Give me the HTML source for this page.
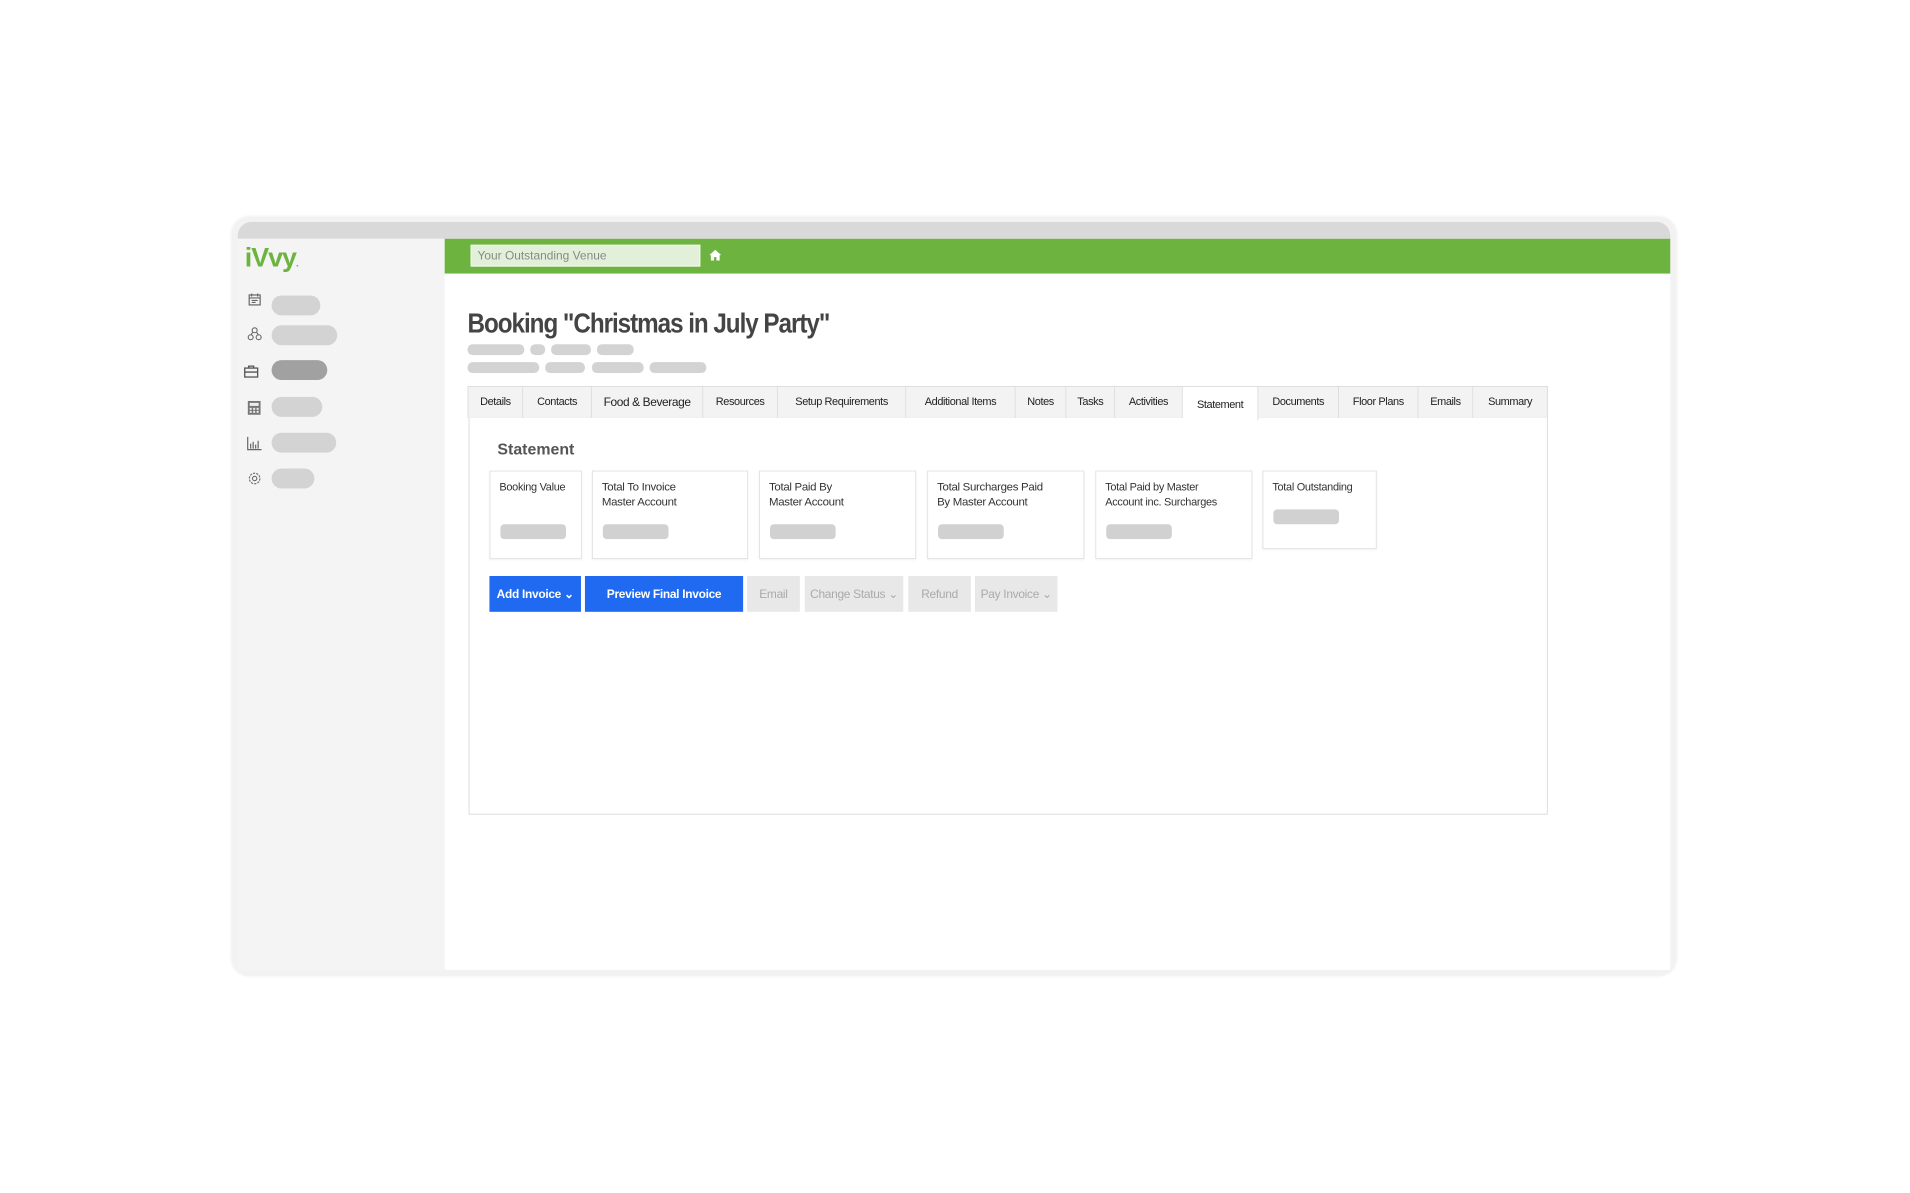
<!DOCTYPE html>
<html><head><meta charset="utf-8"><style>
*{margin:0;padding:0;box-sizing:border-box}
body{width:1910px;height:1193px;background:#fff;position:relative;font-family:"Liberation Sans",sans-serif;overflow:hidden;color:#333}
#w{position:absolute;left:0;top:0;width:1910px;height:1193px;transform:scale(0.9948);transform-origin:0 0}
.a{position:absolute}
.pill{position:absolute;background:#d3d3d3;border-radius:11px;height:20px}
.ph{position:absolute;background:#d3d3d3;border-radius:5px;height:11px}
.tab{position:absolute;top:389px;height:31px;border-right:1px solid #ddd;background:#f3f3f3;font-size:11px;line-height:31px;text-align:center;color:#222;letter-spacing:-0.4px;white-space:nowrap}
.card{position:absolute;top:473px;height:89px;border:1px solid #e3e3e3;background:#fff;font-size:11.5px;line-height:15px;padding:9px 9px;color:#333;letter-spacing:-0.3px;white-space:nowrap;box-shadow:0 1px 2px rgba(0,0,0,.05)}
.card i{position:absolute;left:10px;top:53px;width:66px;height:15px;background:#d1d1d1;border-radius:4px}
.btn{position:absolute;top:579px;height:36px;line-height:36px;text-align:center;font-size:12px;letter-spacing:-0.3px;white-space:nowrap}
.g{background:#e8e8e8;color:#aaa}
.b{background:#1f6af0;color:#fff;font-weight:bold}
svg{position:absolute}
</style></head><body><div id="w">
<div class="a" style="left:233px;top:218px;width:1452px;height:763px;border-radius:18px;background:#f2f2f2;box-shadow:0 0 3px rgba(0,0,0,.08)"></div>
<div class="a" style="left:239px;top:223px;width:1440px;height:17px;background:#d9d9d9;border-radius:14px 14px 0 0"></div>
<div class="a" style="left:239px;top:240px;width:208px;height:735px;background:#f4f4f4"></div>
<div class="a" style="left:447px;top:240px;width:1232px;height:735px;background:#fff"></div>
<div class="a" style="left:447px;top:240px;width:1232px;height:35px;background:#6db33f"></div>
<div class="a" style="left:473px;top:246px;width:231px;height:22px;background:#e2f0d9;border:1px solid #f4faf0;font-size:12px;color:#888;line-height:20px;padding-left:6px">Your Outstanding Venue</div>
<svg style="left:713px;top:251px" width="12" height="11" viewBox="0 0 12 11" fill="#fff"><path d="M6 0L0 5.5h1.6V11h3.2V7.5h2.4V11h3.2V5.5H12z"/></svg>
<div class="a" style="left:246px;top:244px;color:#6db33f;font-size:27px;font-weight:bold;letter-spacing:-1px">iVvy<span style="font-size:10px">.</span></div>
<svg style="left:249px;top:294px" width="14" height="14" viewBox="0 0 14 14" fill="none" stroke="#666" stroke-width="1.2"><rect x="1.5" y="2.5" width="11" height="10"/><path d="M1.5 5.5h11M4 1v3M10 1v3M4 8h6M4 10h4"/></svg>
<svg style="left:248px;top:328px" width="16" height="15" viewBox="0 0 16 15" fill="none" stroke="#666" stroke-width="1.1"><circle cx="8" cy="4" r="2.5"/><circle cx="4" cy="11" r="2.5"/><circle cx="12" cy="11" r="2.5"/><path d="M6 6l-2 3M10 6l2 3"/></svg>
<svg style="left:245px;top:367px" width="15" height="13" viewBox="0 0 15 13" fill="none" stroke="#555" stroke-width="1.3"><rect x="1" y="3" width="13" height="9"/><path d="M5 3V1h5v2M1 7h13"/></svg>
<svg style="left:249px;top:403px" width="13" height="14" viewBox="0 0 13 14" fill="#777"><rect x="0" y="0" width="13" height="14"/><rect x="2" y="2" width="9" height="3" fill="#eee"/><rect x="2" y="7" width="2" height="2" fill="#eee"/><rect x="5.5" y="7" width="2" height="2" fill="#eee"/><rect x="9" y="7" width="2" height="2" fill="#eee"/><rect x="2" y="10" width="2" height="2" fill="#eee"/><rect x="5.5" y="10" width="2" height="2" fill="#eee"/><rect x="9" y="10" width="2" height="2" fill="#eee"/></svg>
<svg style="left:248px;top:439px" width="15" height="14" viewBox="0 0 15 14" fill="none" stroke="#666" stroke-width="1.2"><path d="M1 0v13h14M4 12V7M6.5 12V5M9 12V8M11.5 12V4"/></svg>
<svg style="left:249px;top:474px" width="14" height="14" viewBox="0 0 14 14" fill="none" stroke="#666" stroke-width="1.1"><circle cx="7" cy="7" r="2.2"/><circle cx="7" cy="7" r="5.3" stroke-dasharray="2.2 1.1"/></svg>
<div class="pill" style="left:273px;top:297px;width:49px"></div>
<div class="pill" style="left:273px;top:327px;width:66px"></div>
<div class="pill" style="left:273px;top:362px;width:56px;background:#a1a1a1"></div>
<div class="pill" style="left:273px;top:399px;width:51px"></div>
<div class="pill" style="left:273px;top:435px;width:65px"></div>
<div class="pill" style="left:273px;top:471px;width:43px"></div>
<div class="a" style="left:470px;top:309px;font-size:28px;font-weight:bold;color:#444;letter-spacing:-1.2px;white-space:nowrap;transform:scaleX(0.87);transform-origin:0 0">Booking "Christmas in July Party"</div>
<div class="ph" style="left:470px;top:346px;width:57px"></div>
<div class="ph" style="left:533px;top:346px;width:15px"></div>
<div class="ph" style="left:554px;top:346px;width:40px"></div>
<div class="ph" style="left:600px;top:346px;width:37px"></div>
<div class="ph" style="left:470px;top:364px;width:72px"></div>
<div class="ph" style="left:548px;top:364px;width:40px"></div>
<div class="ph" style="left:595px;top:364px;width:52px"></div>
<div class="ph" style="left:653px;top:364px;width:57px"></div>
<div class="a" style="left:471px;top:419px;width:1085px;height:400px;border:1px solid #ddd;background:#fff"></div>
<div class="a" style="left:470px;top:388px;width:1086px;height:32px;border:1px solid #ddd;border-right:none"></div>
<div class="tab" style="left:471px;width:55px">Details</div>
<div class="tab" style="left:526px;width:69px">Contacts</div>
<div class="tab" style="left:595px;width:112px;font-size:12px">Food &amp; Beverage</div>
<div class="tab" style="left:707px;width:75px">Resources</div>
<div class="tab" style="left:782px;width:129px">Setup Requirements</div>
<div class="tab" style="left:911px;width:110px">Additional Items</div>
<div class="tab" style="left:1021px;width:51px">Notes</div>
<div class="tab" style="left:1072px;width:49px">Tasks</div>
<div class="tab" style="left:1121px;width:68px">Activities</div>
<div class="tab" style="left:1189px;width:76px;background:#fff;height:33px;line-height:36px">Statement</div>
<div class="tab" style="left:1265px;width:81px">Documents</div>
<div class="tab" style="left:1346px;width:80px">Floor Plans</div>
<div class="tab" style="left:1426px;width:55px">Emails</div>
<div class="tab" style="left:1481px;width:75px">Summary</div>
<div class="a" style="left:500px;top:444px;font-size:16px;font-weight:bold;color:#555">Statement</div>
<div class="card" style="left:492px;width:93px;font-size:11px">Booking Value<i></i></div>
<div class="card" style="left:595px;width:157px">Total To Invoice<br>Master Account<i></i></div>
<div class="card" style="left:763px;width:158px">Total Paid By<br>Master Account<i></i></div>
<div class="card" style="left:932px;width:158px">Total Surcharges Paid<br>By Master Account<i></i></div>
<div class="card" style="left:1101px;width:158px;font-size:11px">Total Paid by Master<br>Account inc. Surcharges<i></i></div>
<div class="card" style="left:1269px;width:115px;height:79px;font-size:11px">Total Outstanding<i style="top:38px"></i></div>
<div class="btn b" style="left:492px;width:92px">Add Invoice &#x2304;</div>
<div class="btn b" style="left:588px;width:159px">Preview Final Invoice</div>
<div class="btn g" style="left:751px;width:53px">Email</div>
<div class="btn g" style="left:809px;width:99px">Change Status &#x2304;</div>
<div class="btn g" style="left:913px;width:63px">Refund</div>
<div class="btn g" style="left:980px;width:83px">Pay Invoice &#x2304;</div>
</div></body></html>
